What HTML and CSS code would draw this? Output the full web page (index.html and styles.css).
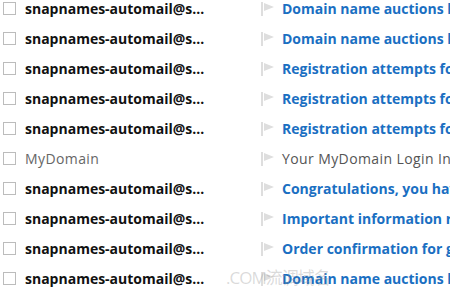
FILE: index.html
```html
<!DOCTYPE html>
<html lang="en">
  <head>
    <meta charset="UTF-8" />
    <title>Inbox</title>
    <link rel="stylesheet" href="styles.css">
  </head>
  <body>
    <ul class="mail-list">
      <li class="mail unread">
        <span class="check"></span>
        <span class="sender">snapnames-automail@snapnames.com</span>
        <span class="flag"></span>
        <span class="subject">Domain name auctions have started</span>
      </li>
      <li class="mail unread">
        <span class="check"></span>
        <span class="sender">snapnames-automail@snapnames.com</span>
        <span class="flag"></span>
        <span class="subject">Domain name auctions have started</span>
      </li>
      <li class="mail unread">
        <span class="check"></span>
        <span class="sender">snapnames-automail@snapnames.com</span>
        <span class="flag"></span>
        <span class="subject">Registration attempts for your domains</span>
      </li>
      <li class="mail unread">
        <span class="check"></span>
        <span class="sender">snapnames-automail@snapnames.com</span>
        <span class="flag"></span>
        <span class="subject">Registration attempts for your domains</span>
      </li>
      <li class="mail unread">
        <span class="check"></span>
        <span class="sender">snapnames-automail@snapnames.com</span>
        <span class="flag"></span>
        <span class="subject">Registration attempts for your domains</span>
      </li>
      <li class="mail">
        <span class="check"></span>
        <span class="sender">MyDomain</span>
        <span class="flag"></span>
        <span class="subject">Your MyDomain Login Information</span>
      </li>
      <li class="mail unread">
        <span class="check"></span>
        <span class="sender">snapnames-automail@snapnames.com</span>
        <span class="flag"></span>
        <span class="subject">Congratulations, you have won</span>
      </li>
      <li class="mail unread">
        <span class="check"></span>
        <span class="sender">snapnames-automail@snapnames.com</span>
        <span class="flag"></span>
        <span class="subject">Important information regarding your account</span>
      </li>
      <li class="mail unread">
        <span class="check"></span>
        <span class="sender">snapnames-automail@snapnames.com</span>
        <span class="flag"></span>
        <span class="subject">Order confirmation for golf.com</span>
      </li>
      <li class="mail unread">
        <span class="check"></span>
        <span class="sender">snapnames-automail@snapnames.com</span>
        <span class="flag"></span>
        <span class="subject">Domain name auctions have started</span>
      </li>
    </ul>
    <div class="watermark">.COM流调域名</div>
  </body>
</html>
```

FILE: styles.css
```css
body {
  margin: 0;
  padding: 0;
  background-color: #ffffff;
  font-family: "Open Sans", "Noto Sans CJK SC", sans-serif;
  overflow: hidden;
  position: relative;
}

.mail-list {
  list-style-type: none;
  margin: -7px 0 0 0;
  padding: 0;
}

.mail {
  display: flex;
  align-items: center;
  height: 30px;
  font-size: 14px;
  white-space: nowrap;
}

.check {
  flex: none;
  box-sizing: border-box;
  width: 13px;
  height: 13px;
  margin: 1px 9px 0 3px;
  border: 1px solid #bcbcbc;
  background-color: #fff;
}

.sender {
  flex: none;
  width: 188px;
  margin-right: 48px;
  overflow: hidden;
  text-overflow: ellipsis;
  color: #666;
  letter-spacing: 0.4px;
}

.flag {
  flex: none;
  position: relative;
  width: 12px;
  height: 14px;
  margin: 1px 7px 0 0;
  border-left: 2px solid #dedede;
}

.flag::after {
  content: "";
  position: absolute;
  left: 1px;
  top: 1px;
  border-left: 10px solid #dedede;
  border-top: 4px solid transparent;
  border-bottom: 4px solid transparent;
}

.subject {
  flex: none;
  color: #555;
  letter-spacing: 0.4px;
}

.unread .sender {
  font-weight: bold;
  color: #111;
  letter-spacing: 0;
}

.unread .subject {
  font-weight: bold;
  color: #1a6fc2;
  letter-spacing: 0;
}

.watermark {
  position: absolute;
  left: 226px;
  top: 264px;
  font-size: 17px;
  color: rgba(150, 150, 150, 0.35);
  letter-spacing: -1px;
}
```
